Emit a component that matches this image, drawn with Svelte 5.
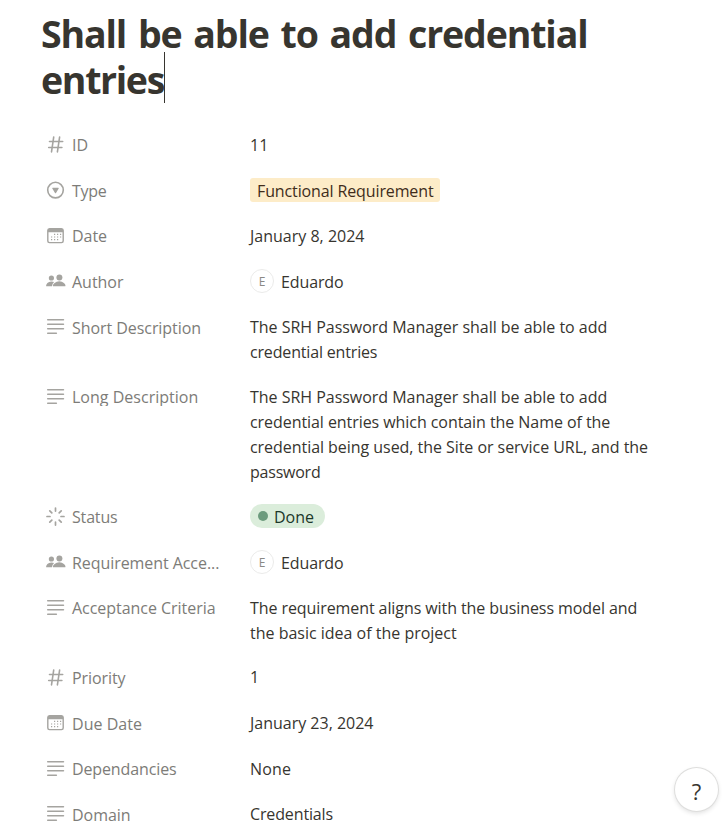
<script>
  const rows = [
    { icon: 'hash', label: 'ID', lw: 17, h: 46, lines: [['11', 18]] },
    { icon: 'select', label: 'Type', lw: 34.5, h: 45, tag: true, lines: [['Functional Requirement', 176.5]] },
    { icon: 'date', label: 'Date', lw: 35, h: 46, lines: [['January 8, 2024', 114.5]] },
    { icon: 'people', label: 'Author', lw: 51.5, h: 45, person: true, lines: [['Eduardo', 62.5]] },
    { icon: 'text', label: 'Short Description', lw: 129, h: 70, low: true, lines: [['The SRH Password Manager shall be able to add', 357.2], ['credential entries', 127.3]] },
    { icon: 'text', label: 'Long Description', lw: 126.3, h: 120, clipped: true, lines: [['The SRH Password Manager shall be able to add', 357.2], ['credential entries which contain the Name of the', 360.2], ['credential being used, the Site or service URL, and the', 398], ['password', 70.5]] },
    { icon: 'status', label: 'Status', lw: 45.5, h: 46, done: true, lines: [['Done', 40]] },
    { icon: 'people', label: 'Requirement Acce...', lw: 147.3, h: 45, person: true, lines: [['Eduardo', 62.5]] },
    { icon: 'text', label: 'Acceptance Criteria', lw: 143.5, h: 70, lines: [['The requirement aligns with the business model and', 387.2], ['the basic idea of the project', 206.7]] },
    { icon: 'hash', label: 'Priority', lw: 53.5, h: 45, high: true, lines: [['1', 9]] },
    { icon: 'date', label: 'Due Date', lw: 70, h: 46, low: true, lines: [['January 23, 2024', 123.5]] },
    { icon: 'text', label: 'Dependancies', lw: 104.5, h: 45, lines: [['None', 41.3]] },
    { icon: 'text', label: 'Domain', lw: 58.5, h: 46, low: true, lines: [['Credentials', 83]] }
  ];

  // Spreads tracking evenly so a line of text fills its measure.
  function track(node, width) {
    const natural = node.getBoundingClientRect().width;
    const count = node.textContent.length;
    if (count > 2) node.style.letterSpacing = `${(width - natural) / count}px`;
  }
</script>

{#snippet icon(name)}
  <svg class="icon" viewBox="-0.5 -0.5 18 18" width="18" height="18" aria-hidden="true">
    {#if name === 'hash'}
      <path d="M7.2 1.6 5 16.4M13.1 1.6 10.9 16.4M3 6h13.2M2.2 12h13.2" fill="none" stroke="currentColor" stroke-width="1.6" stroke-linecap="round" />
    {:else if name === 'select'}
      <circle cx="9" cy="8.6" r="7.8" fill="none" stroke="currentColor" stroke-width="1.6" />
      <path d="M6.3 6.2h5.4q.8 0 .5.7l-2.7 4.5q-.5.7-1 0L5.8 6.9q-.3-.7.5-.7z" fill="currentColor" />
    {:else if name === 'date'}
      <path fill-rule="evenodd" d="M3 1.5h12Q17.4 1.5 17.4 4v10.5q0 2.3-2.4 2.3H3q-2.4 0-2.4-2.3V4Q.6 1.5 3 1.5zM2 5.7v8.6q0 1.2 1.3 1.2h11.4q1.3 0 1.3-1.2V5.7z" fill="currentColor" />
      <path d="M7.5 7.8h1.2m1.8 0h1.2m1.8 0h1.2M4.5 10.5h1.2m1.8 0h1.2m1.8 0h1.2m1.8 0h1.2M4.5 13.2h1.2m1.8 0h1.2m1.8 0h1.2" stroke="currentColor" stroke-width="1.2" />
    {:else if name === 'people'}
      <circle cx="4.9" cy="5.5" r="2.6" fill="currentColor" />
      <circle cx="12.9" cy="5" r="3" fill="currentColor" />
      <path d="M-.4 13.3q0-1.5 1.3-2.9 1.5-1.5 3.9-1.5 1.6 0 2.8.6-1.8 1.5-2.1 4.3H0q-.4 0-.4-.5z" fill="currentColor" />
      <path d="M7 13.8q-.6 0-.6-.6 0-1.5 1.7-2.8 1.9-1.6 4.7-1.6t4.6 1.6q1.6 1.3 1.6 2.8 0 .6-.6.6z" fill="currentColor" />
    {:else if name === 'text'}
      <path d="M1.2 2.3h15.8M1.2 6.8h15.8M1.2 11.3h15.8M1.2 15.7h8.7" fill="none" stroke="currentColor" stroke-width="1.45" stroke-linecap="round" />
    {:else}
      <path d="M9 .6v3M9 14.6v3M.5 9h3M14.5 9h3M3.3 3.3l2 2M12.7 12.7l2 2M14.7 3.3l-2 2M3.3 14.7l2-2" fill="none" stroke="currentColor" stroke-width="1.7" stroke-linecap="round" />
    {/if}
  </svg>
{/snippet}

<main>
  <h1>
    <span class="line"><span use:track={546.5}>Shall be able to add credential</span></span>
    <span class="line"><span use:track={123}>entries</span><i class="caret"></i></span>
  </h1>

  <div class="properties">
    {#each rows as row}
      <div class="row" style:height="{row.h}px">
        <div class="label">
          {@render icon(row.icon)}
          <span class="name" class:low={row.low} class:clipped={row.clipped}><span use:track={row.lw}>{row.label}</span></span>
        </div>
        <div class="value" class:high={row.high} class:tag={row.tag} class:done={row.done}>
          {#if row.person}<span class="avatar">E</span>{/if}
          {#if row.done}<span class="dot"></span>{/if}
          <div class="lines">
            {#each row.lines as [text, width]}
              <div class="line"><span use:track={width}>{text}</span></div>
            {/each}
          </div>
        </div>
      </div>
    {/each}
  </div>

  <button class="help" aria-label="Help">?</button>
</main>

<style>
  :global(body) {
    background: #fff;
  }
  main {
    box-sizing: border-box;
    height: 838px;
    overflow: hidden;
    padding: 11px 0 0 41px;
    font-family: 'Open Sans', 'Noto Sans', sans-serif;
    font-size: 16px;
    color: #37352f;
  }
  h1 {
    margin: 0 0 19px;
    font-size: 37.5px;
    line-height: 45px;
    font-weight: 700;
    word-spacing: 3.2px;
  }
  .line {
    display: block;
    white-space: nowrap;
  }
  h1 .line {
    display: flex;
    height: 46px;
  }
  .caret {
    width: 1px;
    height: 51px;
    margin-top: -5px;
    background: #37352f;
  }
  .row {
    display: flex;
    align-items: flex-start;
    box-sizing: border-box;
    padding-top: 11px;
    line-height: 25px;
  }
  .label {
    display: flex;
    width: 204px;
    padding-left: 5px;
    color: #7d7c78;
  }
  .icon {
    flex: none;
    margin: 2px 8px 0 0;
    color: #a5a4a0;
    overflow: visible;
  }
  .name {
    white-space: nowrap;
  }
  .low {
    padding-top: 1px;
  }
  .high {
    margin-top: -1px;
  }
  .clipped {
    height: 21px;
    overflow: hidden;
  }
  .value {
    display: flex;
    align-items: center;
  }
  .tag {
    height: 24px;
    margin-top: -1px;
    padding: 0 6.5px 0 7px;
    border-radius: 3px;
    background: #fdecc8;
    color: #402c1b;
  }
  .tag .lines,
  .done .lines {
    padding-top: 3px;
  }
  .done {
    box-sizing: border-box;
    width: 75px;
    height: 24px;
    margin-top: -1px;
    padding-left: 8px;
    border-radius: 12px;
    background: #dbeddb;
    color: #1c3829;
  }
  .dot {
    width: 10px;
    height: 10px;
    margin-right: 6px;
    border-radius: 50%;
    background: #6c9b7d;
  }
  .avatar {
    box-sizing: border-box;
    width: 24px;
    height: 24px;
    margin: -3px 7px 0 0;
    border: 1px solid #ebebea;
    border-radius: 50%;
    font-size: 12px;
    line-height: 23px;
    text-align: center;
    color: #8a8985;
  }
  .help {
    position: absolute;
    left: 675px;
    top: 768px;
    width: 43px;
    height: 43px;
    padding: 0;
    border: 0;
    border-radius: 50%;
    background: #fff;
    box-shadow: 0 0 0 1px #dededd, 0 2px 5px rgba(15, 15, 15, 0.14);
    font: 500 22px/46px 'Open Sans', sans-serif;
    color: #37352f;
  }
</style>
